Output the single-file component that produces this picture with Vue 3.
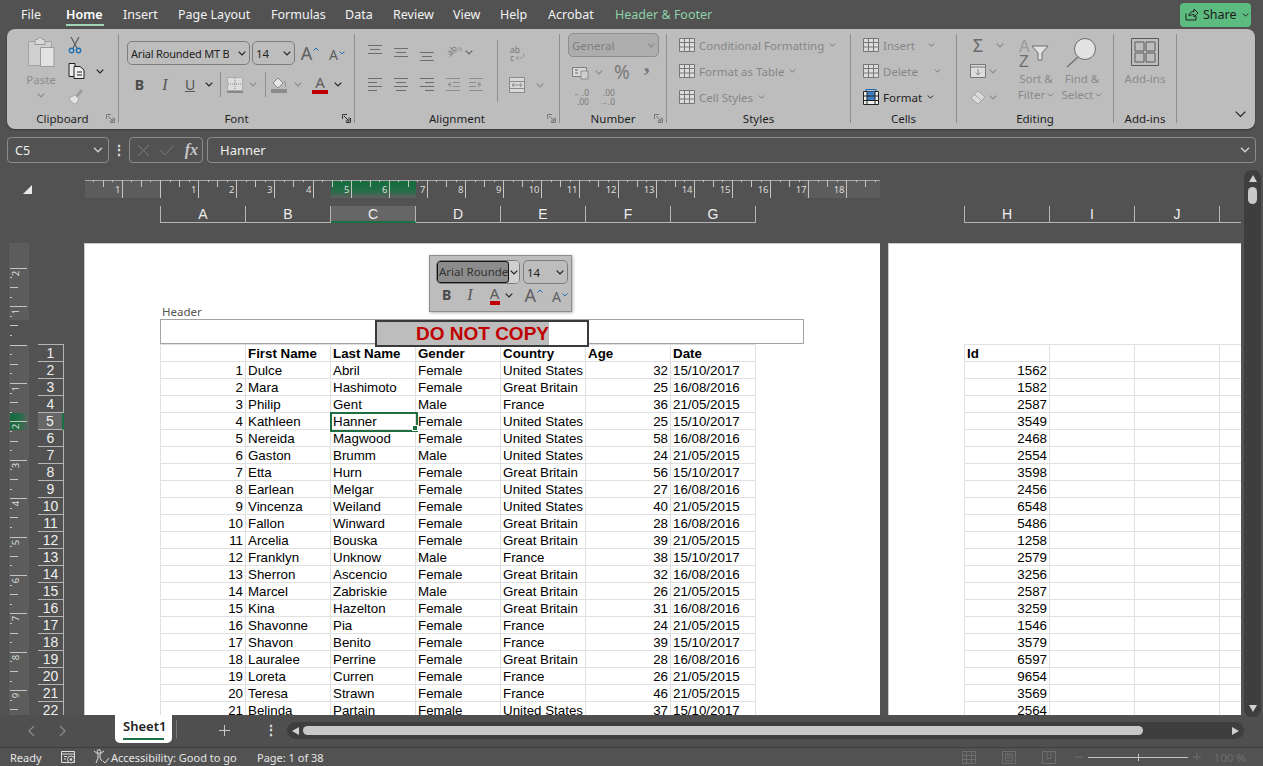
<template>
  <div class="app">
    <svg class="defs" aria-hidden="true">
      <symbol id="chev" viewBox="0 0 8 5"><path d="M.7.7 4 4 7.3.7" fill="none" stroke="currentColor" stroke-width="1.2"/></symbol>
      <symbol id="launch" viewBox="0 0 9 9"><path d="M.5 5V.5H5M8.5 4v4.5H4M2 2l5 5M7 3.5V7H3.5" fill="none" stroke="currentColor"/></symbol>
      <symbol id="tablegrid" viewBox="0 0 16 16"><path d="M.5 1.5h15v13H.5zM.5 5.5h15M.5 10h15M5.5 1.5v13M10.500 1.5v13" fill="#ddd" stroke="currentColor"/></symbol>
    </svg>

    <header class="tabs">
      <span v-for="t in tabs" :key="t.n" class="tab" :class="t.c" :style="{ width: t.w + 'px' }">{{ t.n }}</span>
      <button class="share">
        <svg width="14" height="13" viewBox="0 0 14 13"><path d="M1 5.500V12h10V8M4 8c0-3 2-4.500 5-4.500V1l4 4-4 4V6.500C7 6.500 5 7 4 8z" fill="none" stroke="#1f1f1f"/></svg>
        <span>Share</span>
        <svg class="chev"><use href="#chev"/></svg>
      </button>
    </header>

    <section class="ribbon">
      <div class="group clip">
        <div class="body clip-body">
          <div class="paste">
            <svg width="28" height="30" viewBox="0 0 28 30"><path d="M1.500 4.500h23v24h-23z" fill="#cfcfcf" stroke="#a3a3a3"/><path d="M8 2.500h2.500a2.500 2 0 0 1 5 0H18v5H8z" fill="#d8d8d8" stroke="#9c9c9c"/><path d="M13.500 10.500h13.500v19H13.500z" fill="#e2e2e2" stroke="#9c9c9c"/></svg>
            <span class="off">Paste</span>
            <svg class="chev off"><use href="#chev"/></svg>
          </div>
          <div class="clip-tools">
            <svg width="14" height="17" viewBox="0 0 14 17"><path d="M3 0l6 11M11 0L5 11" stroke="#555" stroke-width="1.100" fill="none"/><circle cx="3.500" cy="13.500" r="2.200" fill="none" stroke="#1f6fb5" stroke-width="1.400"/><circle cx="10.500" cy="13.500" r="2.200" fill="none" stroke="#1f6fb5" stroke-width="1.400"/></svg>
            <div class="copy-row">
              <svg width="17" height="16" viewBox="0 0 17 16"><path d="M1 .5h6v13H1z" fill="#e8e8e8" stroke="#222"/><path d="M6 3.500h6l4 3.500v8.500H6z" fill="#eee" stroke="#222"/><path d="M9 9h5M9 12h5" stroke="#222"/></svg>
              <svg class="chev dk"><use href="#chev"/></svg>
            </div>
            <svg width="16" height="17" viewBox="0 0 16 17"><path d="M1 10l6-3 4 4-3 5c-3 0-5-2-7-6z" fill="#e4e4e4" stroke="#a5a5a5"/><path d="M8 7l5-6 2 2-5 6z" fill="#9c9c9c"/></svg>
          </div>
        </div>
        <div class="label">Clipboard<svg class="launch"><use href="#launch"/></svg></div>
      </div>

      <div class="group font">
        <div class="body">
          <div class="font-row1">
            <div class="select fontsel"><span>Arial Rounded MT B</span><svg class="chev dk"><use href="#chev"/></svg></div>
            <div class="select sizesel"><span>14</span><svg class="chev dk"><use href="#chev"/></svg></div>
            <span class="grow">A<svg class="caret" viewBox="0 0 6 4"><path d="M.5 3.500 3 1l2.500 2.500" fill="none" stroke="#1f6fb5"/></svg></span>
            <span class="shrink">A<svg class="caret" viewBox="0 0 6 4"><path d="M.5.5 3 3 5.500.5" fill="none" stroke="#1f6fb5"/></svg></span>
          </div>
          <div class="font-row2">
            <b class="fmt">B</b>
            <i class="fmt ital">I</i>
            <u class="fmt und">U</u>
            <svg class="chev dk"><use href="#chev"/></svg>
            <span class="vsep"></span>
            <svg width="16" height="16" viewBox="0 0 16 16"><rect x=".5" y=".5" width="15" height="13" fill="#ddd" stroke="#8a8a8a" stroke-dasharray="1 1"/><path d="M8 1v12M1 7h14" stroke="#8a8a8a" stroke-dasharray="1 1"/><path d="M0 15h16" stroke="#777" stroke-width="1.500"/></svg>
            <svg class="chev off"><use href="#chev"/></svg>
            <span class="vsep"></span>
            <svg width="16" height="17" viewBox="0 0 16 17"><path d="M2 7l5-5 5 5-5 5z" fill="#e6e6e6" stroke="#8a8a8a"/><path d="M13 5c2 2 2 4 1 6" stroke="#8a8a8a" fill="none"/><rect y="13" width="16" height="4" fill="#8c8c8c"/></svg>
            <svg class="chev off"><use href="#chev"/></svg>
            <span class="fcolor">A</span>
            <svg class="chev dk"><use href="#chev"/></svg>
          </div>
        </div>
        <div class="label">Font<svg class="launch dark"><use href="#launch"/></svg></div>
      </div>

      <div class="group align">
        <div class="body align-body">
          <div class="align-left">
            <svg v-for="(a, i) in alignTop" :key="'t' + i" width="14" height="17" viewBox="0 0 14 17"><path :d="a" stroke="#6d6d6d" fill="none"/></svg>
            <svg width="17" height="17" viewBox="0 0 17 17"><path d="M3 13 15 4M11 4h4v4" stroke="#9a9a9a" fill="none"/><text x="1" y="10" class="ab" transform="rotate(-45 5 7)">ab</text></svg>
            <svg class="chev dk2 orient-chev"><use href="#chev"/></svg>
            <svg v-for="(a, i) in alignBottom" :key="'b' + i" width="14" height="14" viewBox="0 0 14 14"><path :d="a" :stroke="i > 2 ? '#8c8c8c' : '#6d6d6d'" fill="none"/></svg>
          </div>
          <span class="vsep tall"></span>
          <div class="align-right">
            <svg width="17" height="18" viewBox="0 0 17 18"><text x="1" y="9" class="ab">ab</text><text x="1" y="17" class="ab">c</text><path d="M14 9c2 3 0 5-3 5H7m2-2-2 2 2 2" stroke="#9a9a9a" fill="none"/></svg>
            <span></span>
            <svg width="16" height="16" viewBox="0 0 16 16"><path d="M.5.500h15v15H.5zM.5 4.500h15M.5 11.500h15" fill="#d9d9d9" stroke="#8a8a8a"/><path d="M3 8h10M5 6 3 8l2 2M11 6l2 2-2 2" stroke="#8a8a8a" fill="none"/></svg>
            <svg class="chev off"><use href="#chev"/></svg>
          </div>
        </div>
        <div class="label">Alignment<svg class="launch"><use href="#launch"/></svg></div>
      </div>

      <div class="group number">
        <div class="body">
          <div class="select general"><span>General</span><svg class="chev off"><use href="#chev"/></svg></div>
          <div class="num-row">
            <svg width="17" height="14" viewBox="0 0 17 14"><path d="M.5 1.500h14v9H.5z" fill="#d9d9d9" stroke="#7b7b7b"/><path d="M9 5h7v8H9z" fill="#cfcfcf" stroke="#8c8c8c"/><path d="M3 4h3M3 7h3" stroke="#666"/></svg>
            <svg class="chev off"><use href="#chev"/></svg>
            <span class="pct">%</span>
            <span class="comma">,</span>
          </div>
          <div class="num-row2">
            <span class="dec"><em>←.0</em><em>.00</em></span>
            <span class="dec"><em>.00</em><em>→.0</em></span>
          </div>
        </div>
        <div class="label">Number<svg class="launch"><use href="#launch"/></svg></div>
      </div>

      <div class="group styles">
        <div class="body list">
          <div class="li"><svg class="i16"><use href="#tablegrid"/></svg><span>Conditional Formatting</span><svg class="chev"><use href="#chev"/></svg></div>
          <div class="li"><svg class="i16"><use href="#tablegrid"/></svg><span>Format as Table</span><svg class="chev"><use href="#chev"/></svg></div>
          <div class="li"><svg class="i16"><use href="#tablegrid"/></svg><span>Cell Styles</span><svg class="chev"><use href="#chev"/></svg></div>
        </div>
        <div class="label">Styles</div>
      </div>

      <div class="group cells">
        <div class="body list">
          <div class="li"><svg class="i16"><use href="#tablegrid"/></svg><span class="w-ins">Insert</span><svg class="chev"><use href="#chev"/></svg></div>
          <div class="li"><svg class="i16"><use href="#tablegrid"/></svg><span class="w-del">Delete</span><svg class="chev"><use href="#chev"/></svg></div>
          <div class="li active">
            <svg width="16" height="16" viewBox="0 0 16 16"><path d="M.5 2.500h15v13H.5z" fill="#eee" stroke="#222"/><path d="M4 2.500h8v9H4z" fill="#3d80c4"/><path d="M.5 7h15M.5 11.500h15M4 2.500v13M12 2.500v13" stroke="#222" fill="none"/><path d="M3 .5h10M3 0v2M13 0v2" stroke="#1f6fb5"/></svg>
            <span>Format</span><svg class="chev"><use href="#chev"/></svg>
          </div>
        </div>
        <div class="label">Cells</div>
      </div>

      <div class="group editing">
        <div class="body edit-body">
          <div class="edit-left">
            <div class="li2 sum"><span class="sigma">Σ</span><svg class="chev off"><use href="#chev"/></svg></div>
            <div class="li2"><svg width="16" height="14" viewBox="0 0 16 14"><path d="M.5.500h15v13H.5z" fill="#ddd" stroke="#777"/><path d="M.5 3h15" stroke="#777"/><path d="M8 5v6M5.500 8.500 8 11l2.500-2.500" stroke="#8a8a8a" fill="none"/></svg><svg class="chev off"><use href="#chev"/></svg></div>
            <div class="li2"><svg width="16" height="16" viewBox="0 0 16 16"><path d="M1 9l7-7 7 6-7 7z" fill="#dcdcdc" stroke="#a3a3a3"/><path d="M4.500 5.500l7 6" stroke="#a3a3a3"/></svg><svg class="chev off"><use href="#chev"/></svg></div>
          </div>
          <div class="big sort">
            <svg width="34" height="32" viewBox="0 0 34 32"><text x="0" y="15" class="az lt">A</text><text x="0" y="30" class="az">Z</text><path d="M13 9h16l-6 7v7h-4v-7z" fill="#e2e2e2" stroke="#6d6d6d"/></svg>
            <span>Sort &amp;</span>
            <span>Filter<svg class="chev"><use href="#chev"/></svg></span>
          </div>
          <div class="big find">
            <svg width="32" height="32" viewBox="0 0 32 32"><circle cx="19" cy="12" r="10.500" fill="#e2e2e2" stroke="#6d6d6d"/><path d="M12 20 1 30" stroke="#6d6d6d" stroke-width="1.200"/></svg>
            <span>Find &amp;</span>
            <span>Select<svg class="chev"><use href="#chev"/></svg></span>
          </div>
        </div>
        <div class="label">Editing</div>
      </div>

      <div class="group addins">
        <div class="body big">
          <svg width="28" height="28" viewBox="0 0 28 28"><path d="M.5.500h27v27H.5z" fill="none" stroke="#5a5a5a"/><path d="M4 4h9v9H4zM15 4h9v9h-9zM4 15h9v9H4zM15 15h9v9h-9z" fill="none" stroke="#5a5a5a"/></svg>
          <span>Add-ins</span>
        </div>
        <div class="label">Add-ins</div>
      </div>

      <div class="collapse"><svg width="11" height="7" viewBox="0 0 11 7"><path d="M.7.7 5.500 5.500 10.300.7" fill="none" stroke="#222" stroke-width="1.200"/></svg></div>
    </section>

    <section class="fbar">
      <div class="fbox namebox"><span>C5</span><svg class="chev lt"><use href="#chev"/></svg></div>
      <span class="fdots">⋮</span>
      <div class="fbox fbtns">
        <svg width="13" height="13" viewBox="0 0 13 13"><path d="M1 1l11 11M12 1 1 12" stroke="#7a7a7a" fill="none"/></svg>
        <svg width="16" height="12" viewBox="0 0 16 12"><path d="M1 6l5 5L15 1" stroke="#7a7a7a" fill="none"/></svg>
        <span class="fx">fx</span>
      </div>
      <div class="fbox finput"><span>Hanner</span><svg class="chev lt"><use href="#chev"/></svg></div>
    </section>

    <main class="work">
      <div class="sheet-area">
        <div class="top-ruler-row">
          <div class="corner"></div>
          <svg class="hruler" width="795" height="18" viewBox="0 0 795 18">
            <rect width="75" height="18" fill="#5c5c5c"/>
            <rect x="719" width="76" height="18" fill="#5c5c5c"/>
            <defs>
              <linearGradient id="hg" x1="0" x2="0" y1="0" y2="1"><stop offset="0" stop-color="#126b3a"/><stop offset=".6" stop-color="#256d47"/><stop offset="1" stop-color="#5f5f5f"/></linearGradient>
              <linearGradient id="vg" x1="0" x2="1" y1="0" y2="0"><stop offset="0" stop-color="#126b3a"/><stop offset=".5" stop-color="#256d47"/><stop offset="1" stop-color="#5f5f5f"/></linearGradient>
            </defs>
            <rect x="246" width="85" height="18" fill="url(#hg)"/>
            <path d="M0 .5H795" stroke="#a8a8a8"/>
            <path v-for="t in hTicks" :key="t.k" :d="t.d" stroke="#c4c4c4"/>
            <text v-for="t in hLabels" :key="t.k" :x="t.x" y="13" text-anchor="end" class="rtext">{{ t.n }}</text>
          </svg>
        </div>
        <div class="colheads">
          <div class="colgroup">
            <div v-for="c in colsA" :key="c" class="ch" :class="{ sel: c === 'C' }">{{ c }}</div>
          </div>
          <div class="colgroup second">
            <div v-for="c in colsB" :key="c" class="ch">{{ c }}</div>
          </div>
        </div>
        <div class="pages">
          <div class="gutter">
            <svg class="vruler" width="20" height="472" viewBox="0 0 20 472">
              <rect x="0" width="20" height="77" fill="#5c5c5c"/>
              <rect x="0" y="102" width="20" height="370" fill="#5c5c5c"/>
              <rect x="1" y="170" width="19" height="17" fill="url(#vg)"/>
              <path v-for="t in vTicks" :key="t.k" :d="t.d" stroke="#c4c4c4"/>
              <text v-for="t in vLabels" :key="t.k" class="rtext" text-anchor="middle" :transform="t.tr">{{ t.n }}</text>
            </svg>
            <div class="rowheads">
              <div v-for="n in 22" :key="n" class="rh" :class="{ sel: n === 5 }">{{ n }}</div>
            </div>
          </div>

          <div class="page first">
            <div class="hdr-label">Header</div>
            <div class="hdr-box">
              <div class="hdr-center"><span class="hdr-text">DO NOT COPY</span></div>
            </div>
            <div class="grid">
              <div class="row">
                <div class="c"></div>
                <div v-for="h in heads" :key="h" class="c b">{{ h }}</div>
              </div>
              <div v-for="(r, i) in rows" :key="i" class="row">
                <div class="c num">{{ i + 1 }}</div>
                <div class="c">{{ r[0] }}</div>
                <div class="c" :class="{ active: i === 3 }">{{ r[1] }}</div>
                <div class="c">{{ r[2] }}</div>
                <div class="c">{{ r[3] }}</div>
                <div class="c num">{{ r[4] }}</div>
                <div class="c">{{ r[5] }}</div>
              </div>
            </div>
            <div class="mini">
              <div class="mini-row1">
                <div class="mini-font"><span class="mini-sel">Arial Rounded</span><span class="mini-drop"><svg class="chev dk"><use href="#chev"/></svg></span></div>
                <div class="select mini-size"><span>14</span><svg class="chev dk"><use href="#chev"/></svg></div>
              </div>
              <div class="mini-row2">
                <b class="fmt">B</b>
                <i class="fmt ital">I</i>
                <span class="fcolor">A</span>
                <svg class="chev dk"><use href="#chev"/></svg>
                <span class="grow">A<svg class="caret" viewBox="0 0 6 4"><path d="M.5 3.500 3 1l2.500 2.500" fill="none" stroke="#1f6fb5"/></svg></span>
                <span class="shrink">A<svg class="caret" viewBox="0 0 6 4"><path d="M.5.5 3 3 5.500.5" fill="none" stroke="#1f6fb5"/></svg></span>
              </div>
            </div>
          </div>

          <div class="page second">
            <div class="grid">
              <div class="row">
                <div class="c b">Id</div><div class="c"></div><div class="c"></div><div class="c"></div>
              </div>
              <div v-for="(r, i) in rows" :key="i" class="row">
                <div class="c num">{{ r[6] }}</div><div class="c"></div><div class="c"></div><div class="c"></div>
              </div>
            </div>
          </div>
        </div>
      </div>
      <div class="vscroll">
        <span class="arr up"></span>
        <span class="vthumb"></span>
        <span class="arr down"></span>
      </div>
    </main>

    <section class="sheetbar">
      <div class="nav">
        <svg width="8" height="12" viewBox="0 0 8 12"><path d="M7 1 2 6l5 5" fill="none" stroke="#8c8c8c" stroke-width="1.200"/></svg>
        <svg width="8" height="12" viewBox="0 0 8 12"><path d="M1 1l5 5-5 5" fill="none" stroke="#8c8c8c" stroke-width="1.200"/></svg>
      </div>
      <div class="sheettab"><span>Sheet1</span></div>
      <span class="tabsep"></span>
      <svg class="plus" width="11" height="11" viewBox="0 0 11 11"><path d="M5.500 0v11M0 5.500h11" stroke="#c8c8c8"/></svg>
      <span class="sdots">⋮</span>
      <div class="hscroll">
        <span class="harr left"></span>
        <span class="hthumb"></span>
        <span class="harr right"></span>
      </div>
    </section>

    <footer class="status">
      <span class="ready">Ready</span>
      <svg class="macro" width="15" height="14" viewBox="0 0 15 14"><path d="M.5 1.500h13v11H.5zM.5 4h13M3 6.500h3M3 9h2" fill="none" stroke="#ddd"/><circle cx="10" cy="9.500" r="3.500" fill="#525252" stroke="#ddd"/><circle cx="10" cy="9.500" r="1.300" fill="#ddd"/></svg>
      <svg class="access" width="17" height="16" viewBox="0 0 17 16"><circle cx="6" cy="2.500" r="1.800" fill="none" stroke="#ddd"/><path d="M1 2l4 3v4l-2 5M11 2 7 5v4l2 3M10 12l2 2 4-5" fill="none" stroke="#ddd"/></svg>
      <span class="acc-text">Accessibility: Good to go</span>
      <span class="page-text">Page: 1 of 38</span>
      <div class="views">
        <svg width="14" height="13" viewBox="0 0 14 13"><path d="M.5.500h13v12H.5zM.5 4.500h13M.5 8.500h13M4.500.5v12M9.500.5v12" fill="none" stroke="#6e6e6e"/></svg>
        <svg width="14" height="13" viewBox="0 0 14 13"><path d="M.5.500h13v12H.5zM3.500 3h7v7h-7zM5 5h4M5 7h4" fill="none" stroke="#6e6e6e"/></svg>
        <svg width="14" height="13" viewBox="0 0 14 13"><path d="M.5.500h13v12H.5zM5 .5v7h4V.5" fill="none" stroke="#6e6e6e"/></svg>
      </div>
      <div class="zoom">
        <svg width="8" height="8" viewBox="0 0 8 8"><path d="M0 4h8" stroke="#6e6e6e"/></svg>
        <span class="slider"><i></i></span>
        <svg width="8" height="8" viewBox="0 0 8 8"><path d="M0 4h8M4 0v8" stroke="#6e6e6e"/></svg>
        <span class="zoomval">100 %</span>
      </div>
    </footer>
  </div>
</template>

<script setup>
const tabs = [
  { n: 'File', w: 45 }, { n: 'Home', w: 57, c: 'on' }, { n: 'Insert', w: 55 },
  { n: 'Page Layout', w: 93 }, { n: 'Formulas', w: 74 }, { n: 'Data', w: 48 },
  { n: 'Review', w: 60 }, { n: 'View', w: 47 }, { n: 'Help', w: 48 },
  { n: 'Acrobat', w: 67 }, { n: 'Header & Footer', w: 110, c: 'ctx' },
]
const colsA = ['A', 'B', 'C', 'D', 'E', 'F', 'G']
const colsB = ['H', 'I', 'J', '']
const heads = ['First Name', 'Last Name', 'Gender', 'Country', 'Age', 'Date']
const raw = `Dulce|Abril|Female|United States|32|15/10/2017|1562
Mara|Hashimoto|Female|Great Britain|25|16/08/2016|1582
Philip|Gent|Male|France|36|21/05/2015|2587
Kathleen|Hanner|Female|United States|25|15/10/2017|3549
Nereida|Magwood|Female|United States|58|16/08/2016|2468
Gaston|Brumm|Male|United States|24|21/05/2015|2554
Etta|Hurn|Female|Great Britain|56|15/10/2017|3598
Earlean|Melgar|Female|United States|27|16/08/2016|2456
Vincenza|Weiland|Female|United States|40|21/05/2015|6548
Fallon|Winward|Female|Great Britain|28|16/08/2016|5486
Arcelia|Bouska|Female|Great Britain|39|21/05/2015|1258
Franklyn|Unknow|Male|France|38|15/10/2017|2579
Sherron|Ascencio|Female|Great Britain|32|16/08/2016|3256
Marcel|Zabriskie|Male|Great Britain|26|21/05/2015|2587
Kina|Hazelton|Female|Great Britain|31|16/08/2016|3259
Shavonne|Pia|Female|France|24|21/05/2015|1546
Shavon|Benito|Female|France|39|15/10/2017|3579
Lauralee|Perrine|Female|Great Britain|28|16/08/2016|6597
Loreta|Curren|Female|France|26|21/05/2015|9654
Teresa|Strawn|Female|France|46|21/05/2015|3569
Belinda|Partain|Female|United States|37|15/10/2017|2564`
const rows = raw.split('\n').map((l) => l.split('|'))

const alignTop = [
  'M0 1.500h14M2 5.500h10M0 9.500h14',
  'M0 4.500h14M2 8.500h10M0 12.500h14',
  'M0 8.500h14M2 12.500h10M0 16.500h14',
]
const alignBottom = [
  'M0 .5h14M0 4.500h9M0 8.500h14M0 12.500h9',
  'M0 .5h14M2 4.500h10M0 8.500h14M2 12.500h10',
  'M0 .5h14M5 4.500h9M0 8.500h14M5 12.500h9',
  'M0 .5h14M7 4.500h7M7 8.500h7M0 12.500h14M5 4 2 6.500 5 9M2 6.500h4',
  'M0 .5h14M0 4.500h7M0 8.500h7M0 12.500h14M9 4l3 2.500L9 9M12 6.500H8',
]

const U = 38.13
const hTicks = []
const hLabels = []
for (let q = -8; q < 76; q++) {
  const x = Math.round(75 + (q * U) / 4) + 0.5
  if (x < 0 || x > 795) continue
  const h = q % 4 === 0 ? 18 : q % 2 === 0 ? 7 : 2
  hTicks.push({ k: q, d: `M${x} 0V${h}` })
  if (q % 4 === 0 && q !== 0) hLabels.push({ k: q, x: x - 2, n: Math.abs(q / 4) })
}

const V = 38.4
const vTicks = []
const vLabels = []
for (let q = -8; q < 40; q++) {
  const y = Math.round(101.5 + (q * V) / 4) + 0.5
  if (y < 0 || y > 472) continue
  const w = q % 4 === 0 ? 17 : q % 2 === 0 ? 8 : 2
  vTicks.push({ k: q, d: `M1 ${y}H${1 + w}` })
  if (q % 4 === 0 && q !== 0) vLabels.push({ k: q, n: Math.abs(q / 4), tr: `translate(9.500 ${y + 5}) rotate(-90)` })
}
</script>

<style>
body { background: #525252; }
</style>

<style scoped>
.app {
  width: 1263px; height: 766px; overflow: hidden; display: flex; flex-direction: column;
  background: #525252; color: #fff; font: 12.5px "Noto Sans", "Open Sans", sans-serif;
}
.defs { width: 0; height: 0; flex: none; }
svg { display: block; flex: none; }
.chev { width: 8px; height: 5px; color: #444; }
.chev.dk { color: #222; }
.chev.dk2 { color: #666; }
.chev.off { color: #8c8c8c; }
.chev.lt { color: #d0d0d0; width: 10px; height: 6px; }
.off { color: #8c8c8c; }

/* tabs */
.tabs { height: 29px; flex: none; display: flex; align-items: center; padding-left: 21px; position: relative; }
.tab { color: #f2f2f2; height: 29px; line-height: 29px; white-space: nowrap; position: relative; }
.tab.on { font-weight: 600; color: #fff; }
.tab.on::after { content: ""; position: absolute; left: 0; width: 38px; top: 24px; height: 2px; background: #9fd5b5; }
.tab.ctx { color: #8ed1a9; }
.share {
  margin-left: auto; margin-right: 12px; width: 71px; height: 24px; border: 0; border-radius: 4px; background: #5cbb7f;
  display: flex; align-items: center; gap: 4px; padding: 0 0 0 5px; color: #1c1c1c; font: 12.5px "Noto Sans", sans-serif;
}
.share .chev { color: #1c1c1c; width: 7px; height: 4px; margin-left: 1px; }

/* ribbon */
.ribbon {
  height: 100px; box-sizing: border-box; flex: none; margin: 0 8px 0 7px; padding: 5px 0 6px; display: flex; border-radius: 8px;
  background: #bdbdbd; color: #8a8a8a; position: relative; box-shadow: 0 1px 2px rgba(0,0,0,.35); font-size: 11.5px;
}
.group { box-sizing: border-box; border-right: 1px solid #8e8e8e; display: flex; flex-direction: column; position: relative; flex: none; }
.clip { width: 112px; } .font { width: 236px; } .align { width: 205px; } .number { width: 107px; }
.styles { width: 184px; } .cells { width: 106px; } .editing { width: 157px; } .addins { width: 63px; }
.body { flex: 1; min-height: 0; }
.label {
  height: 14px; line-height: 14px; margin-bottom: -3px; text-align: center; color: #1f1f1f; font-size: 11.500px; position: relative;
}
.launch { position: absolute; right: 3px; top: 2px; width: 9px; height: 9px; color: #777; }
.launch.dark { color: #333; }
.vsep { width: 1px; height: 25px; background: #8e8e8e; justify-self: center; }

.clip-body { display: flex; padding-left: 18px; }
.paste { width: 32px; display: flex; flex-direction: column; align-items: center; padding-top: 3px; }
.paste span { margin-top: 4px; line-height: 17px; }
.paste .chev { margin-top: 5px; }
.clip-tools { margin-left: 11px; display: flex; flex-direction: column; align-items: flex-start; padding-top: 3px; gap: 9px; }
.copy-row { display: flex; align-items: center; gap: 11px; }

.select {
  border: 1px solid #7d7d7d; border-radius: 5px; display: flex; align-items: center; justify-content: space-between;
  box-sizing: border-box; color: #222; font-size: 11.5px; padding: 0 3px; white-space: nowrap;
}
.select span { overflow: hidden; }
.fontsel span { font-size: 11px; letter-spacing: -.2px; }
.font-row1 { display: grid; grid-template-columns: 123px 43px 26px 24px; column-gap: 2px; padding: 7px 0 0 8px; align-items: center; }
.fontsel, .sizesel { height: 24px; }
.grow, .shrink { display: flex; align-items: flex-start; color: #606060; line-height: 1; justify-content: center; }
.grow { font-size: 18px; } .shrink { font-size: 14px; padding-top: 3px; }
.caret { width: 6px; height: 4px; margin-top: 3px; margin-left: 1px; }
.font-row2 {
  display: grid; grid-template-columns: 25px 26px 24px 14px 8px 21px 15px 10px 18px 20px 24px 12px;
  justify-items: center; align-items: center; padding: 7px 0 0 8px;
}
.fmt { color: #4a4a4a; font-size: 14px; line-height: 1; font-family: "Noto Sans", sans-serif; }
.ital { font-family: "Liberation Serif", serif; font-size: 16px; color: #555; }
.und { font-size: 14px; color: #555; font-weight: 400; }
.fcolor {
  color: #5c5c5c; font-size: 15px; line-height: 15px; width: 16px; text-align: center; border-bottom: 4px solid #c00000; display: block;
}

.align-body { display: flex; padding: 10px 0 0 13px; }
.align-left { display: grid; grid-template-columns: 26px 26px 26px 23px 20px; grid-template-rows: 17px 14px; row-gap: 17px; align-items: center; width: 129px; flex: none; }
.orient-chev { margin-left: -4px; }
.ab { font: 8.5px "Noto Sans", sans-serif; fill: #777; }
.vsep.tall { height: 62px; margin: -4px 0 0 0; flex: none; }
.align-right { display: grid; grid-template-columns: 16px 16px; grid-template-rows: 17px 16px; gap: 16px 11px; margin-left: 11px; align-items: center; align-content: start; }

.general { width: 91px; height: 24px; margin: -1px 0 0 8px; background: #adadad; border-color: #8e8e8e; color: #7d7d7d; border-radius: 5px; }
.num-row { display: flex; align-items: center; padding: 6px 0 0 12px; height: 25px; box-sizing: border-box; color: #7a7a7a; }
.num-row .chev { margin-left: 6px; }
.pct { font-size: 19px; margin-left: 11px; line-height: 19px; }
.comma { font: 700 24px/14px "Liberation Serif", serif; margin: 0 0 12px 14px; height: 21px; }
.num-row2 { display: flex; gap: 9px; padding: 6px 0 0 12px; }
.dec { display: flex; flex-direction: column; width: 17px; font-size: 8.5px; line-height: 9px; color: #7a7a7a; text-align: right; }
.dec em { font-style: normal; }

.list { display: flex; flex-direction: column; gap: 10px; padding: 3px 0 0 12px; }
.li { display: flex; align-items: center; gap: 4px; height: 16px; color: #868686; white-space: nowrap; }
.li .chev { margin-left: 1px; color: #777; width: 7px; height: 4px; }
.i16 { width: 16px; height: 16px; color: #767676; }
.li.active { color: #222; }
.li.active .chev { color: #222; }
.w-ins { width: 40px; } .w-del { width: 46px; }

.edit-body { display: flex; padding: 3px 0 0 13px; }
.edit-left { display: flex; flex-direction: column; gap: 10px; width: 47px; flex: none; }
.li2 { display: flex; align-items: center; gap: 3px; height: 16px; }
.li2.sum { gap: 10px; }
.sigma { font-size: 18px; line-height: 16px; color: #6a6a6a; width: 16px; text-align: center; }
.big { display: flex; flex-direction: column; align-items: center; line-height: 16px; color: #8a8a8a; white-space: nowrap; }
.big span { display: flex; align-items: center; gap: 2px; }
.big svg + span { margin-top: 2px; }
.big .chev { width: 7px; height: 4px; color: #777; }
.sort { width: 38px; flex: none; } .find { width: 46px; margin-left: 4px; flex: none; }
.az { font: 16px "Liberation Sans", sans-serif; fill: #6d6d6d; }
.az.lt { fill: #9a9a9a; }
.addins .big { padding-top: 4px; }
.addins .big svg + span { margin-top: 5px; }
.collapse { position: absolute; right: 9px; bottom: 11px; }

/* formula bar */
.fbar { height: 26px; flex: none; margin-top: 8px; padding-left: 7px; display: flex; align-items: stretch; }
.fbox { border: 1px solid #8c8c8c; border-radius: 4px; box-sizing: border-box; display: flex; align-items: center; }
.namebox { width: 102px; padding: 0 5px 0 7px; justify-content: space-between; color: #eee; font-size: 12.500px; }
.fdots { width: 20px; text-align: center; line-height: 25px; color: #ddd; font-size: 14px; font-weight: 700; }
.fbtns { width: 74px; padding: 0 4px 0 7px; justify-content: space-between; }
.fx { font: italic 700 16px "Liberation Serif", serif; color: #c6c6c6; }
.finput { width: 1049px; margin-left: 4px; padding: 0 5px 0 12px; justify-content: space-between; color: #eee; font-size: 13px; }

/* workspace */
.work { flex: none; height: 552px; display: flex; }
.sheet-area { width: 1241px; display: flex; flex-direction: column; overflow: hidden; }
.top-ruler-row { display: flex; padding-top: 17px; height: 18px; flex: none; }
.corner { width: 85px; position: relative; }
.corner::after {
  content: ""; position: absolute; left: 23px; top: 5px; width: 0; height: 0;
  border-style: solid; border-width: 0 0 9px 9px; border-color: transparent transparent #e8e8e8 transparent;
}
.rtext { font: 9.500px "Noto Sans", sans-serif; fill: #dcdcdc; }
.colheads { display: flex; padding: 8px 0 0 160px; height: 17px; flex: none; }
.colgroup { display: flex; border-left: 1px solid #b5b5b5; flex: none; }
.colgroup.second { margin-left: 208px; }
.ch {
  width: 85px; height: 17px; box-sizing: border-box; border-right: 1px solid #b5b5b5; border-bottom: 1px solid #b5b5b5;
  text-align: center; font: 14px/16px "Liberation Sans", sans-serif; color: #eee; flex: none;
}
.ch.sel { background: #666; border-bottom: 2px solid #1b7043; }
.pages { margin-top: 20px; height: 472px; flex: none; display: flex; overflow: hidden; }
.gutter { width: 84px; flex: none; display: flex; }
.vruler { margin-left: 9px; }
.rowheads { margin-left: 9px; padding-top: 101px; width: 26px; flex: none; }
.rh {
  height: 17px; box-sizing: border-box; border-bottom: 1px solid #b5b5b5; border-right: 1px solid #b5b5b5; text-align: center;
  font: 14px/16px "Liberation Sans", sans-serif; color: #eee;
}
.rh:first-child { height: 18px; border-top: 1px solid #b5b5b5; }
.rh.sel { background: #666; border-right: 2px solid #1b7043; }
.page { background: #fff; border-left: 1px solid #c8c8c8; border-top: 1px solid #c8c8c8; box-sizing: border-box; height: 472px; padding-left: 75px; flex: none; overflow: hidden; position: relative; color: #000; }
.page.first { width: 796px; padding-top: 61px; }
.page.second { width: 353px; margin-left: 8px; padding-top: 100px; }
.hdr-label { height: 14px; line-height: 14px; margin-left: 2px; color: #555; font-size: 11.500px; }
.hdr-box { width: 644px; height: 25px; box-sizing: border-box; border: 1px solid #a3a3a3; border-bottom-width: 1px; position: relative; }
.hdr-center {
  position: absolute; left: 214px; top: 0; width: 214px; height: 27px; box-sizing: border-box; background: #fff;
  border: 2px solid #3a3a3a; z-index: 1;
}
.hdr-text {
  display: block; width: 172px; height: 23px; background: #bdbdbd; color: #c00000; text-align: right; white-space: nowrap;
  font: 700 19px/24px "Liberation Sans", sans-serif;
}
.grid { border-top: 1px solid #e0e0e0; border-left: 1px solid #e0e0e0; width: max-content; font: 13.330px/18px "Liberation Sans", sans-serif; }
.row { display: flex; height: 17px; }
.c {
  width: 85px; height: 17px; box-sizing: border-box; border-right: 1px solid #e0e0e0; border-bottom: 1px solid #e0e0e0;
  padding: 0 2px; white-space: nowrap; overflow: hidden; flex: none;
}
.c.b { font-weight: 700; }
.c.num { text-align: right; }
.c.active { overflow: visible; position: relative; }
.c.active::before { content: ""; position: absolute; left: -1px; top: -1px; width: 84px; height: 16px; border: 2px solid #1e6e42; }
.c.active::after { content: ""; position: absolute; right: -3px; bottom: -2px; background: #1e6e42; border: 1px solid #fff; box-sizing: content-box; width: 4px; height: 4px; }

.mini {
  position: absolute; left: 344px; top: 11px; width: 143px; height: 57px; box-sizing: border-box; z-index: 3; background: #bdbdbd;
  border: 1px solid #8e8e8e; box-shadow: 1px 1px 3px rgba(0,0,0,.3); padding: 4px 3px 0 6px; color: #444;
}
.mini-row1 { display: flex; gap: 3px; height: 24px; }
.mini-font { width: 84px; display: flex; border: 1px solid #7d7d7d; border-radius: 5px; box-sizing: border-box; overflow: hidden; font-size: 11.5px; }
.mini-sel { width: 72px; flex: none; background: #8c8c8c; border: 1px solid #111; box-sizing: border-box; border-radius: 3px; white-space: nowrap; overflow: hidden; line-height: 20px; padding-left: 1px; color: #333; }
.mini-drop { flex: 1; background: #d0d0d0; display: flex; align-items: center; justify-content: center; }
.mini-size { width: 45px; height: 24px; }
.mini-row2 { display: flex; align-items: center; height: 22px; padding-left: 6px; }
.mini-row2 .ital { margin-left: 16px; }
.mini-row2 .fcolor { margin-left: 17px; }
.mini-row2 .chev { margin-left: 5px; }
.mini-row2 .grow { margin-left: 12px; }
.mini-row2 .shrink { margin-left: 9px; }

.vscroll { width: 17px; margin: 7px 0 -2px 3px; background: #3e3e3e; border-radius: 8px; position: relative; display: flex; flex-direction: column; align-items: center; z-index: 2; }
.arr { width: 0; height: 0; border-left: 4.500px solid transparent; border-right: 4.500px solid transparent; }
.arr.up { border-bottom: 7px solid #d0d0d0; margin-top: 5px; }
.vthumb { width: 9px; height: 17px; border-radius: 5px; background: #c8c8c8; margin-top: 5px; }
.arr.down { border-top: 7px solid #d0d0d0; margin-top: auto; margin-bottom: 5px; }

/* sheet bar */
.sheetbar { height: 32px; flex: none; display: flex; align-items: flex-start; background: #4f4f4f; border-bottom: 1px solid #3e3e3e; position: relative; box-sizing: content-box; }
.nav { width: 115px; display: flex; padding: 10px 0 0 27px; gap: 24px; box-sizing: border-box; flex: none; }
.sheettab {
  width: 57px; height: 28px; background: #fff; border-radius: 0 0 5px 5px; box-sizing: border-box; padding: 0 8px; color: #222;
  font-size: 13px; font-weight: 600; line-height: 22px; flex: none;
}
.sheettab span { display: block; border-bottom: 2px solid #1b7043; height: 23px; white-space: nowrap; }
.tabsep { width: 1px; height: 18px; background: #777; margin: 5px 0 0 4px; flex: none; }
.plus { margin: 10px 0 0 42px; }
.sdots { width: 12px; margin-left: 34px; text-align: center; margin-top: 5px; font-size: 14px; font-weight: 700; color: #ddd; line-height: 20px; }
.hscroll { margin: 7px 0 0 11px; width: 957px; height: 17px; background: #3e3e3e; border-radius: 9px; display: flex; align-items: center; flex: none; }
.harr { width: 0; height: 0; border-top: 4.500px solid transparent; border-bottom: 4.500px solid transparent; }
.harr.left { border-right: 7px solid #d0d0d0; margin-left: 5px; }
.hthumb { width: 840px; height: 9px; border-radius: 5px; background: #c8c8c8; margin-left: 4px; }
.harr.right { border-left: 7px solid #d0d0d0; margin-left: auto; margin-right: 5px; }

/* status */
.status { flex: 1; min-height: 0; display: flex; align-items: center; font-size: 11px; color: #e6e6e6; padding-left: 10px; white-space: nowrap; }
.ready { width: 51px; flex: none; }
.access { margin-left: 17px; }
.acc-text { margin-left: 1px; width: 146px; flex: none; }
.page-text { flex: none; }
.views { margin-left: 638px; display: flex; gap: 26px; flex: none; }
.zoom { margin-left: 19px; display: flex; align-items: center; gap: 5px; flex: none; color: #6e6e6e; }
.slider { width: 100px; height: 1px; background: #c4c4c4; position: relative; display: block; }
.slider i { position: absolute; left: 50px; top: -3px; width: 1px; height: 7px; background: #c4c4c4; }
.zoomval { margin-left: 8px; font-size: 11.5px; }
</style>
